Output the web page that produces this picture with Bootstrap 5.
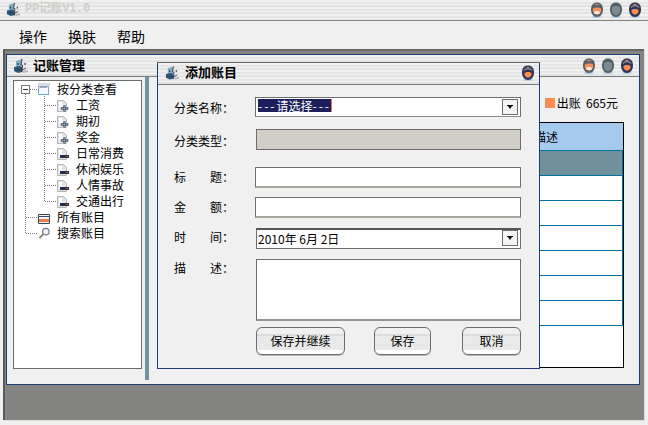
<!DOCTYPE html>
<html lang="zh">
<head>
<meta charset="utf-8">
<title>记账</title>
<link href="https://cdn.jsdelivr.net/npm/bootstrap@5.3.0/dist/css/bootstrap.min.css" rel="stylesheet">
<style>
html,body{margin:0;height:100%;overflow:hidden;background:#f0f0f0}
body{font:12px/16px "Noto Sans CJK SC","Liberation Sans",sans-serif;color:#000}
.app{position:relative;width:648px;height:425px;overflow:hidden;background:#f0f0f0}
.stripes{background:repeating-linear-gradient(180deg,#f1f1f1 0 2px,#e6e6e6 2px 4px,#f3f3f3 4px 5px,#e2e3e3 5px 7px)}
.apptitle{height:21px;border-bottom:1px solid #858585;padding:2px 6px 0 6px}
.apptxt{font:bold 12px/14px "Liberation Mono","Noto Sans CJK SC",monospace;color:#cfcfcb;margin-left:4px;letter-spacing:-.3px}
.menubar{height:28px;padding-left:19px;gap:21px;font-size:14px;line-height:30px}
.mdi{height:371px;width:641px;margin-left:3px;background:#848482;border-left:2px solid #5a5a58;border-top:2px solid #666664;box-shadow:1px 1px 0 #dcdcd6}
.winmain{position:absolute;left:6px;top:54px;width:634px;height:331px;background:#f0f0f0;border:1px solid #1f3c7a}
.titlebar{height:22px;border-bottom:1px solid #7c7c7c;padding:3px 5px 0 6px}
.wintxt{font-size:13px;font-weight:700;line-height:14px;margin-left:4px}
.dlg .wintxt{margin-left:5px;line-height:16px;margin-top:-1px}
.ctrls{gap:5px}
.winbody{height:307px;padding-left:6px}
.treebox{width:129px;height:289px;margin-top:3px;background:#fff;border:1px solid #6e6e6e;position:relative}
.treelines{position:absolute;left:0;top:0}
.trow{height:16px;position:relative;white-space:nowrap;line-height:16px}
.lvl0{padding-left:24px}
.lvl1{padding-left:43px}
.trow svg{margin-right:6px;vertical-align:-2px}
.lvl0 svg{margin-right:7px}
.treelist{padding-top:0;position:relative}
.splitbar{width:4px;height:303px;margin-left:3px;background:#70949c}
.rpanel{width:490px;padding:19px 0 0 8px}
.legendrow{height:14px;padding-right:21px;line-height:14px}
.swatch{width:10px;height:10px;background:#fb8c55;margin-right:2px}
.gridbox{width:467px;height:246px;margin-top:12px;background:#fff;border:1px solid #000}
.gridhead{height:28px;background:#a6caee;border-bottom:1px solid #00709c;padding-right:65px;line-height:27px;font-size:12px}
.gridrow{height:25px;border-bottom:1px solid #0071a0;border-right:1px solid #0071a0}
.gridrow.picked{background:#6f9199}
.dlg{position:absolute;left:157px;top:62px;width:383px;height:307px;background:#f0f0f0;border:1px solid #1f3c7a;border-top-color:#6a6a6a}
.dlg .titlebar{height:22px;padding:2px 4px 0 7px}
.dlgbody{padding:12px 18px 0 16px}
.lbl{width:81px;flex:none}
.nudgedown{padding-top:2px}
.nudgeup{padding-bottom:2px}
.nudgeup2{padding-bottom:4px}
.nudgememo{padding-top:1px}
.f1{margin-bottom:12px}
.f2{margin-bottom:17px}
.f3{margin-bottom:9px}
.f4{margin-bottom:10px}
.f5{margin-bottom:6px}
.fakeselect{width:266px;height:20px;background:#fff;border:1px solid #6e6e6e;border-bottom-color:#8c8c86;padding:1px 2px 0 2px}
.picktext{background:#1d1f5c;color:#fff;height:13px;line-height:13px;border-right:1px solid #e8763a;white-space:nowrap}
.dashes{letter-spacing:2px}
.arrowbtn{width:16px;height:16px;border:1px solid #6e6e6e;margin-top:0;background:#f4f4f4}
.readbox{width:265px;height:21px;margin-left:1px;background:#d1cec8;border:1px solid #6e6e6e}
.form-control.plain{width:266px;height:21px;min-height:0;padding:0 2px;border:1px solid #6e6e6e;border-bottom:2px solid #a6a69e;border-radius:0;background:#fff;box-shadow:none;font-size:12px}
.dateselect{width:265px;height:21px;margin-left:1px;background:#fff;border:1px solid #6e6e6e;border-top:2px solid #555;padding:0 2px 0 1px;line-height:18px}
.form-control.memo{width:266px;height:62px;margin-left:1px;padding:0;border:1px solid #6e6e6e;border-bottom:2px solid #96968e;border-radius:0;resize:none;box-shadow:none}
.btnrow{margin-left:82px}
.btn.skin{height:28px;padding:0;border:1px solid #6c6c6c;border-radius:6px;font-size:12px;line-height:26px;color:#000;background:linear-gradient(180deg,#f0f0f0 0 6px,#dcdddc 6px 8px,#e8e9e8 8px 22px,#fff 22px 100%);box-shadow:0 1px 0 #bcb8b0}
.bw1{width:89px}
.bw2{width:57px;margin-left:29px}
.bw3{width:59px;margin-left:31px}
</style>
</head>
<body>
<svg width="0" height="0" class="d-none">
<defs>
<symbol id="finder" viewBox="0 0 16 16">
<path d="M3 3 9 1l6 1v11l-6 2-6-2z" fill="#e6e6ea"/>
<path d="M3 3 9 1 8 8l1 6-6-1z" fill="#7fb0cc"/>
<path d="M1 9l6-1 2 1v5l-4 1-4-2z" fill="#2f5678"/>
<path d="M9 1 8 7h1.500L9 14" fill="none" stroke="#333" stroke-width=".9"/>
<path d="M5 5v2M12 5v2" stroke="#222" stroke-width="1"/>
<path d="M4 11c2 1.200 6 1.500 9-1" fill="none" stroke="#333" stroke-width=".9"/>
<path d="M10 13l5-1v2l-5 1z" fill="#b4b4ba"/>
</symbol>
<symbol id="knobmin" viewBox="0 0 14 16">
<ellipse cx="7" cy="15" rx="5" ry="1" fill="#b4cde8"/>
<path d="M7 .5c3.500 0 6 2.500 6 7s-2.500 7.500-6 7.500-6-3-6-7.500S3.500.5 7 .5z" fill="#56616a"/>
<path d="M3 6.500c.6-1.500 7.400-1.500 8 0 .6 2 .4 5-4 6.500-4.400-1.500-4.600-4.500-4-6.500z" fill="#fb8c55"/>
<path d="M4 11c1-3 5-3 6 0-1 1.500-5 1.500-6 0z" fill="#fdf3ea"/>
<path d="M5 2.500h4" stroke="#d9825a" stroke-width="1.200"/>
</symbol>
<symbol id="knobmax" viewBox="0 0 14 16">
<ellipse cx="7" cy="15" rx="5" ry="1" fill="#b4cde8"/>
<path d="M7 .5c3.500 0 6 2.500 6 7s-2.500 7.500-6 7.500-6-3-6-7.500S3.500.5 7 .5z" fill="#4f6066"/>
<path d="M3 6c.6-3 7.400-3 8 0 .6 3 .3 6-4 7.500C2.700 12 2.400 9 3 6z" fill="#7f8a8e"/>
</symbol>
<symbol id="knobclose" viewBox="0 0 14 16">
<ellipse cx="7" cy="15" rx="5" ry="1" fill="#b4cde8"/>
<path d="M7 .5c3.500 0 6 2.500 6 7s-2.500 7.500-6 7.500-6-3-6-7.500S3.500.5 7 .5z" fill="#2f3552"/>
<path d="M3 5.500c1.500-2.500 6.500-2.500 8 0" fill="none" stroke="#8a8f96" stroke-width="1.300"/>
<path d="M3.500 8c1-1.500 6-1.500 7 0 .5 2.500-1.500 4.500-3.500 4.500S3 10.500 3.500 8z" fill="#fb8c55"/>
<path d="M5.500 2.500h3" stroke="#d9825a" stroke-width="1.200"/>
</symbol>
<symbol id="docplus" viewBox="0 0 13 12">
<path d="M.5.500h6l3 3v8h-9z" fill="#e4e4e4" stroke="#b4b4b4"/>
<path d="M2 2h3v7H2z" fill="#fff"/>
<path d="M6 5h3v2h2.500v3H9v2H6v-2H3.500V7H6z" fill="#4a5664" stroke="#fff" stroke-width=".5"/>
<path d="M7 6h1v2h2v1H8v2H7V9H5V8h2z" fill="#7a90b0"/>
</symbol>
<symbol id="docbar" viewBox="0 0 13 12">
<path d="M.5.500h6l3 3v8h-9z" fill="#e4e4e4" stroke="#b4b4b4"/>
<path d="M2 2h3v7H2z" fill="#fff"/>
<path d="M3 7h9v3H3z" fill="#23304a"/>
<path d="M9 8h2v1H9z" fill="#d8503a"/>
</symbol>
<symbol id="winico" viewBox="0 0 12 13">
<path d="M0 0h12v3H0z" fill="#d8dce0"/>
<path d="M.5 3.500h10v8h-10z" fill="#f4f8fc" stroke="#8ca4bc"/>
<path d="M1 11.500h10" stroke="#5ca8e0"/>
<path d="M2 4.500h7" stroke="#9cb0c4"/>
</symbol>
<symbol id="cardico" viewBox="0 0 12 10">
<path d="M.5.500h11v9H.5z" fill="#f4f4f4" stroke="#3a4654"/>
<path d="M1 2h10v1H1z" fill="#3a4a78"/>
<path d="M1 5h10v3H1z" fill="#f0804a"/>
</symbol>
<symbol id="lensico" viewBox="0 0 13 13">
<circle cx="8.500" cy="4.500" r="3.500" fill="#eef4fa" stroke="#6c7680" stroke-width="1.200"/>
<path d="M6 7 1.500 11.500" stroke="#8a8070" stroke-width="2"/>
</symbol>
<symbol id="dropico" viewBox="0 0 8 5">
<path d="M1 0h6v1H6L4 4 2 1H1z" fill="#000"/>
</symbol>
</defs>
</svg>

<div class="app">
  <div class="apptitle stripes d-flex align-items-start">
    <svg width="15" height="15"><use href="#finder"/></svg>
    <span class="apptxt">PP记账V1.0</span>
    <div class="ctrls d-flex ms-auto">
      <svg width="14" height="16"><use href="#knobmin"/></svg>
      <svg width="14" height="16"><use href="#knobmax"/></svg>
      <svg width="14" height="16"><use href="#knobclose"/></svg>
    </div>
  </div>
  <div class="menubar d-flex"><span>操作</span><span>换肤</span><span>帮助</span></div>
  <div class="mdi"></div>

  <div class="winmain">
    <div class="titlebar stripes d-flex align-items-start">
      <svg width="16" height="16"><use href="#finder"/></svg>
      <span class="wintxt">记账管理</span>
      <div class="ctrls d-flex ms-auto">
        <svg width="14" height="16"><use href="#knobmin"/></svg>
        <svg width="14" height="16"><use href="#knobmax"/></svg>
        <svg width="14" height="16"><use href="#knobclose"/></svg>
      </div>
    </div>
    <div class="winbody d-flex align-items-start">
      <div class="treebox">
        <svg class="treelines" width="127" height="170" fill="none" stroke="#777" stroke-dasharray="1 1">
          <path d="M11.500 13V153M30.500 15V120M16 8.500h8M31 24.500h12M31 40.500h12M31 56.500h12M31 72.500h12M31 88.500h12M31 104.500h12M31 120.500h12M12 136.500h12M12 152.500h12"/>
          <rect x="7.500" y="4.500" width="8" height="8" fill="#fff" stroke="#777" stroke-dasharray="none"/>
          <path d="M9 8.500h5" stroke="#333" stroke-dasharray="none"/>
        </svg>
        <div class="treelist">
          <div class="trow lvl0"><svg width="12" height="13"><use href="#winico"/></svg>按分类查看</div>
          <div class="trow lvl1"><svg width="13" height="12"><use href="#docplus"/></svg>工资</div>
          <div class="trow lvl1"><svg width="13" height="12"><use href="#docplus"/></svg>期初</div>
          <div class="trow lvl1"><svg width="13" height="12"><use href="#docplus"/></svg>奖金</div>
          <div class="trow lvl1"><svg width="13" height="12"><use href="#docbar"/></svg>日常消费</div>
          <div class="trow lvl1"><svg width="13" height="12"><use href="#docbar"/></svg>休闲娱乐</div>
          <div class="trow lvl1"><svg width="13" height="12"><use href="#docbar"/></svg>人情事故</div>
          <div class="trow lvl1"><svg width="13" height="12"><use href="#docbar"/></svg>交通出行</div>
          <div class="trow lvl0"><svg width="12" height="10"><use href="#cardico"/></svg>所有账目</div>
          <div class="trow lvl0"><svg width="12" height="13"><use href="#lensico"/></svg>搜索账目</div>
        </div>
      </div>
      <div class="splitbar"></div>
      <div class="rpanel">
        <div class="legendrow d-flex justify-content-end align-items-center"><span class="swatch"></span><span>出账&nbsp; 665元</span></div>
        <div class="gridbox">
          <div class="gridhead text-end">描述</div>
          <div class="gridrow picked"></div>
          <div class="gridrow"></div>
          <div class="gridrow"></div>
          <div class="gridrow"></div>
          <div class="gridrow"></div>
          <div class="gridrow"></div>
          <div class="gridrow"></div>
        </div>
      </div>
    </div>
  </div>

  <div class="dlg">
    <div class="titlebar stripes d-flex align-items-start">
      <svg width="15" height="16"><use href="#finder"/></svg>
      <span class="wintxt">添加账目</span>
      <svg class="ms-auto" width="14" height="16"><use href="#knobclose"/></svg>
    </div>
    <div class="dlgbody">
      <div class="d-flex align-items-center f1">
        <span class="lbl nudgedown">分类名称：</span>
        <div class="fakeselect d-flex justify-content-between">
          <span class="picktext"><span class="dashes">---</span>请选择<span class="dashes">---</span></span>
          <span class="arrowbtn d-flex align-items-center justify-content-center"><svg width="8" height="5"><use href="#dropico"/></svg></span>
        </div>
      </div>
      <div class="d-flex align-items-center f2">
        <span class="lbl nudgedown">分类类型：</span>
        <div class="readbox"></div>
      </div>
      <div class="d-flex align-items-center f3">
        <span class="lbl nudgeup">标　　题：</span>
        <input class="form-control plain" type="text" aria-label="标题">
      </div>
      <div class="d-flex align-items-center f4">
        <span class="lbl nudgeup">金　　额：</span>
        <input class="form-control plain" type="text" aria-label="金额">
      </div>
      <div class="d-flex align-items-center f4">
        <span class="lbl nudgeup2">时　　间：</span>
        <div class="dateselect d-flex justify-content-between">
          <span>2010年 6月 2日</span>
          <span class="arrowbtn d-flex align-items-center justify-content-center"><svg width="8" height="5"><use href="#dropico"/></svg></span>
        </div>
      </div>
      <div class="d-flex align-items-start f5">
        <span class="lbl nudgememo">描　　述：</span>
        <textarea class="form-control memo" aria-label="描述"></textarea>
      </div>
      <div class="btnrow d-flex">
        <button class="btn skin bw1" type="button">保存并继续</button>
        <button class="btn skin bw2" type="button">保存</button>
        <button class="btn skin bw3" type="button">取消</button>
      </div>
    </div>
  </div>
</div>
</body>
</html>
